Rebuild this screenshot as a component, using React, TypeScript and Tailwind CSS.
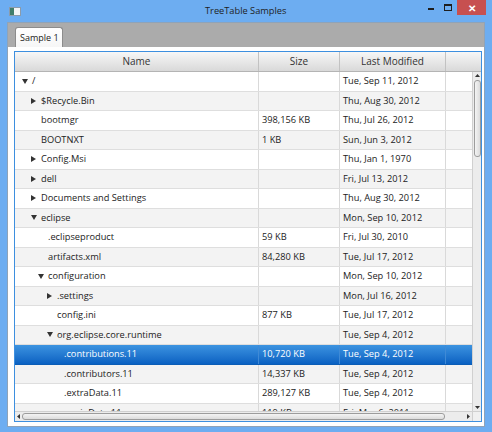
import clsx from 'clsx';

type Row = {
  level: number;
  kind: 'open' | 'closed' | 'leaf';
  name: string;
  size: string;
  date: string;
  selected?: boolean;
};

const ROWS: Row[] = [
  { level: 0, kind: 'open', name: '/', size: '', date: 'Tue, Sep 11, 2012' },
  { level: 1, kind: 'closed', name: '$Recycle.Bin', size: '', date: 'Thu, Aug 30, 2012' },
  { level: 1, kind: 'leaf', name: 'bootmgr', size: '398,156 KB', date: 'Thu, Jul 26, 2012' },
  { level: 1, kind: 'leaf', name: 'BOOTNXT', size: '1 KB', date: 'Sun, Jun 3, 2012' },
  { level: 1, kind: 'closed', name: 'Config.Msi', size: '', date: 'Thu, Jan 1, 1970' },
  { level: 1, kind: 'closed', name: 'dell', size: '', date: 'Fri, Jul 13, 2012' },
  { level: 1, kind: 'closed', name: 'Documents and Settings', size: '', date: 'Thu, Aug 30, 2012' },
  { level: 1, kind: 'open', name: 'eclipse', size: '', date: 'Mon, Sep 10, 2012' },
  { level: 2, kind: 'leaf', name: '.eclipseproduct', size: '59 KB', date: 'Fri, Jul 30, 2010' },
  { level: 2, kind: 'leaf', name: 'artifacts.xml', size: '84,280 KB', date: 'Tue, Jul 17, 2012' },
  { level: 2, kind: 'open', name: 'configuration', size: '', date: 'Mon, Sep 10, 2012' },
  { level: 3, kind: 'closed', name: '.settings', size: '', date: 'Mon, Jul 16, 2012' },
  { level: 3, kind: 'leaf', name: 'config.ini', size: '877 KB', date: 'Tue, Jul 17, 2012' },
  { level: 3, kind: 'open', name: 'org.eclipse.core.runtime', size: '', date: 'Tue, Sep 4, 2012' },
  { level: 4, kind: 'leaf', name: '.contributions.11', size: '10,720 KB', date: 'Tue, Sep 4, 2012', selected: true },
  { level: 4, kind: 'leaf', name: '.contributors.11', size: '14,337 KB', date: 'Tue, Sep 4, 2012' },
  { level: 4, kind: 'leaf', name: '.extraData.11', size: '289,127 KB', date: 'Tue, Sep 4, 2012' },
  { level: 4, kind: 'leaf', name: '.mainData.11', size: '119 KB', date: 'Fri, Mar 6, 2011' },
];

// tree indent per depth (arrow slot is 10px wide, text follows)
const PAD = ['pl-[7px]', 'pl-[16px]', 'pl-[23px]', 'pl-[32px]', 'pl-[39px]'];

function Disclosure({ kind }: { kind: Row['kind'] }) {
  if (kind === 'open')
    return (
      <svg width="6" height="5" viewBox="0 0 6 5">
        <path d="M0 0h6L3 5z" fill="currentColor" />
      </svg>
    );
  if (kind === 'closed')
    return (
      <svg width="5" height="6" viewBox="0 0 5 6">
        <path d="M0 0l5 3-5 3z" fill="currentColor" />
      </svg>
    );
  return null;
}

function TitleBar() {
  return (
    <div className="flex h-[22px] w-full shrink-0 items-start bg-[#6dadf1]">
      <div className="mt-[7px] ml-[9px] flex h-[9px] w-[12px] border border-[#8b9bab] bg-[#f2f4f6]">
        <div className="h-full w-[4px] bg-[#3f7d6c]" />
      </div>
      <div className="ml-[184px] pt-[4px] text-[9.25px] leading-[13px] text-[#1e1e1e]">TreeTable Samples</div>
      <div className="ml-auto mt-[8px] h-[2px] w-[6px] bg-[#1e1e1e]" />
      <div className="ml-[10px] mt-[4px] h-[7px] w-[8px] border border-t-2 border-[#1e1e1e]" />
      <div className="ml-[5px] mr-[6px] flex h-[15px] w-[29px] items-center justify-center bg-[#c75050] text-[10px] font-bold leading-none text-white">
        ✕
      </div>
    </div>
  );
}

function Header() {
  return (
    <div className="flex h-[20px] border-b border-[#b4b4b4] bg-linear-to-b from-[#f7f7f7] to-[#d9d9d9] text-[10px] text-[#333]">
      <div className="flex w-[244px] items-center justify-center border-r border-[#c2c2c2]">Name</div>
      <div className="flex w-[81px] items-center justify-center border-r border-[#c2c2c2]">Size</div>
      <div className="flex w-[106px] items-center justify-center border-r border-[#c2c2c2]">Last Modified</div>
      <div className="flex-1" />
    </div>
  );
}

function TableRow({ row, index }: { row: Row; index: number }) {
  const line = row.selected ? 'border-[#3f8ad6]' : 'border-[#d9d9d9]';
  return (
    <div
      className={clsx(
        'flex h-[19.5px] shrink-0 border-b',
        row.selected
          ? 'border-[#0b5db6] bg-linear-to-b from-[#3c93e0] to-[#0961c2] text-white'
          : index % 2
            ? 'border-[#dedede] bg-[#f3f3f3] text-[#222]'
            : 'border-[#dedede] bg-white text-[#222]',
      )}
    >
      <div className={clsx('flex w-[244px] items-center border-r', line, PAD[row.level])}>
        <span className={clsx('flex w-[10px] items-center', row.selected ? 'text-white' : 'text-[#333]')}>
          <Disclosure kind={row.kind} />
        </span>
        <span>{row.name}</span>
      </div>
      <div className={clsx('flex w-[81px] items-center border-r pl-[3px]', line)}>{row.size}</div>
      <div className={clsx('flex w-[106px] items-center border-r pl-[3px]', line)}>{row.date}</div>
      <div className="w-[26px]" />
    </div>
  );
}

function VScroll() {
  return (
    <div className="flex w-[9px] flex-col border-l border-[#d0d0d0] bg-[#ececec]">
      <div className="flex h-[7px] items-center justify-center">
        <svg width="5" height="3" viewBox="0 0 5 3">
          <path d="M0 3h5L2.5 0z" fill="#333" />
        </svg>
      </div>
      <div className="mx-auto mt-[1px] h-[77px] w-[7px] rounded-[3px] border border-[#9c9c9c] bg-linear-to-r from-[#f4f4f4] to-[#dcdcdc]" />
      <div className="flex-1" />
      <div className="flex h-[7px] items-center justify-center">
        <svg width="5" height="3" viewBox="0 0 5 3">
          <path d="M0 0h5L2.5 3z" fill="#333" />
        </svg>
      </div>
    </div>
  );
}

function HScroll() {
  return (
    <div className="flex h-[10px] border-t border-[#d0d0d0] bg-[#ececec]">
      <div className="flex w-[7px] items-center justify-center">
        <svg width="3" height="5" viewBox="0 0 3 5">
          <path d="M3 0v5L0 2.5z" fill="#333" />
        </svg>
      </div>
      <div className="my-auto h-[7px] w-[423px] rounded-[3px] border border-[#9c9c9c] bg-linear-to-b from-[#f4f4f4] to-[#dcdcdc]" />
      <div className="flex-1" />
      <div className="flex w-[8px] items-center justify-center">
        <svg width="3" height="5" viewBox="0 0 3 5">
          <path d="M0 0v5L3 2.5z" fill="#333" />
        </svg>
      </div>
      <div className="w-[9px] border-l border-[#d0d0d0] bg-[#f0f0f0]" />
    </div>
  );
}

export default function App() {
  return (
    <div className="flex h-[432px] w-[492px] flex-col bg-[#6dadf1] font-['Open_Sans',sans-serif]">
      <TitleBar />
      <div className="mx-[7px] flex h-[405px] flex-col border border-[#8fa3b8] bg-white">
        <div className="flex h-[24px] items-start bg-[#ababab] pl-[7px]">
          <div className="mt-[4px] flex h-[20px] w-[48px] items-center rounded-t-[3px] border border-b-0 border-[#8c8c8c] bg-linear-to-b from-white to-[#f6f6f6] pl-[4px] text-[9px] text-[#222]">
            Sample 1
          </div>
        </div>
        <div className="flex-1 pb-[4px] pl-[6px] pr-[2px] pt-[4px]">
          <div className="flex h-[371px] flex-col border border-[#3d8fdf] bg-white">
            <Header />
            <div className="flex h-[339px]">
              <div className="flex flex-1 flex-col overflow-hidden text-[9.25px]">
                {ROWS.map((r, i) => (
                  <TableRow key={i} row={r} index={i} />
                ))}
              </div>
              <VScroll />
            </div>
            <HScroll />
          </div>
        </div>
      </div>
    </div>
  );
}
